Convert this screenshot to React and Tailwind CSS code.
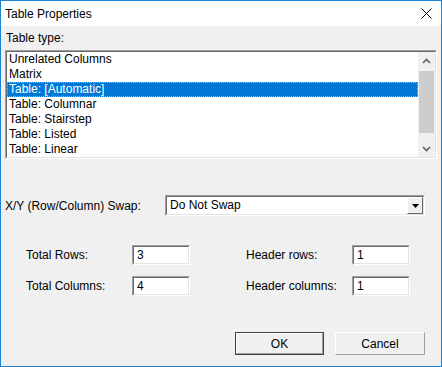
export default function App() {
  const items = [
    "Unrelated Columns",
    "Matrix",
    "Table: [Automatic]",
    "Table: Columnar",
    "Table: Stairstep",
    "Table: Listed",
    "Table: Linear",
  ];
  const Field = ({ value }) => (
    <div className="w-[58px] h-[20px] border border-t-[#a0a0a0] border-l-[#a0a0a0] border-b-white border-r-white">
      <div className="w-full h-full bg-white border border-t-[#696969] border-l-[#696969] border-b-[#e3e3e3] border-r-[#e3e3e3] pl-[3px] leading-[16px]">
        {value}
      </div>
    </div>
  );
  return (
    <div className="w-[442px] h-[367px] border border-[#1883d7] bg-[#f0f0f0] flex flex-col text-[12px] text-black font-['Liberation_Sans',Arial,sans-serif]">
      <div className="h-[25px] bg-white flex items-center justify-between pl-[4px] pr-[9px]">
        <span>Table Properties</span>
        <svg width="11" height="11" viewBox="0 0 11 11">
          <path d="M0.5 0.5L10.5 10.5M10.5 0.5L0.5 10.5" stroke="#000" strokeWidth="1" />
        </svg>
      </div>
      <div className="flex-1 flex flex-col px-[4px]">
        <div className="pt-[5px] h-[20px] leading-[15px] pl-[1px]">Table type:</div>
        <div className="mt-[4px] h-[109px] border border-t-[#a0a0a0] border-l-[#a0a0a0] border-b-white border-r-white">
          <div className="w-full h-full bg-white border border-t-[#696969] border-l-[#696969] border-b-[#e3e3e3] border-r-[#e3e3e3] flex">
            <div className="flex-1 flex flex-col">
              {items.map((it, i) => (
                <div
                  key={it}
                  className={
                    i === 2
                      ? "h-[15px] leading-[13px] pl-[1px] bg-[#0078d7] text-white border border-dotted border-[#f5a055]"
                      : "h-[15px] leading-[15px] pl-[2px]"
                  }
                >
                  {it}
                </div>
              ))}
            </div>
            <div className="w-[17px] bg-[#f0f0f0] flex flex-col">
              <div className="h-[17px] flex items-center justify-center">
                <svg width="9" height="6" viewBox="0 0 9 6">
                  <path d="M1 5L4.5 1.5L8 5" stroke="#606060" strokeWidth="1.6" fill="none" />
                </svg>
              </div>
              <div className="h-[2px]" />
              <div className="h-[62px] mx-[1px] bg-[#cdcdcd]" />
              <div className="flex-1" />
              <div className="h-[17px] flex items-center justify-center">
                <svg width="9" height="6" viewBox="0 0 9 6">
                  <path d="M1 1L4.5 4.5L8 1" stroke="#606060" strokeWidth="1.6" fill="none" />
                </svg>
              </div>
            </div>
          </div>
        </div>

        <div className="mt-[36px] h-[21px] flex items-center">
          <div className="w-[160px]">X/Y (Row/Column) Swap:</div>
          <div className="w-[260px] h-[21px] border border-t-[#a0a0a0] border-l-[#a0a0a0] border-b-white border-r-white">
            <div className="w-full h-full bg-white border border-t-[#696969] border-l-[#696969] border-b-[#e3e3e3] border-r-[#e3e3e3] flex">
              <div className="flex-1 pl-[3px] leading-[17px]">Do Not Swap</div>
              <div className="w-[16px] h-full bg-[#f0f0f0] border border-t-white border-l-white border-b-[#696969] border-r-[#696969] flex items-center justify-center">
                <svg width="7" height="4" viewBox="0 0 7 4">
                  <path d="M0 0H7L3.5 4Z" fill="#000" />
                </svg>
              </div>
            </div>
          </div>
        </div>

        <div className="mt-[29px] flex flex-col gap-[11px] pl-[21px]">
          <div className="h-[20px] flex items-center">
            <div className="w-[106px]">Total Rows:</div>
            <Field value="3" />
            <div className="w-[56px]" />
            <div className="w-[106px]">Header rows:</div>
            <Field value="1" />
          </div>
          <div className="h-[20px] flex items-center">
            <div className="w-[106px]">Total Columns:</div>
            <Field value="4" />
            <div className="w-[56px]" />
            <div className="w-[106px]">Header columns:</div>
            <Field value="1" />
          </div>
        </div>

        <div className="mt-[36px] flex justify-end gap-[11px] pr-[12px]">
          <div className="w-[89px] h-[23px] border border-[#404040] bg-[#e1e1e1]">
            <div className="w-full h-full border border-t-white border-l-white border-b-[#a0a0a0] border-r-[#a0a0a0] bg-[#f0f0f0] flex items-center justify-center">
              OK
            </div>
          </div>
          <div className="w-[90px] h-[23px] border border-t-white border-l-white border-b-[#a0a0a0] border-r-[#a0a0a0] bg-[#f0f0f0] flex items-center justify-center">
            Cancel
          </div>
        </div>
      </div>
    </div>
  );
}
